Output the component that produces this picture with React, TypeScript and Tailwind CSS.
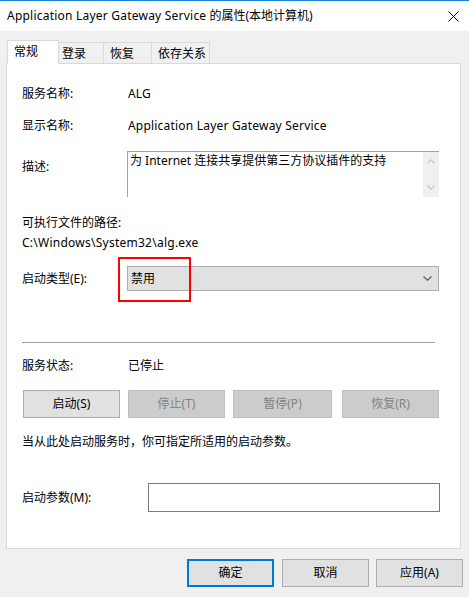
import React from "react";

function Chevron({ up, color, w = 9, h = 5 }: { up?: boolean; color: string; w?: number; h?: number }) {
  return (
    <svg width={w} height={h} viewBox={`0 0 ${w} ${h}`} className="block">
      <path
        d={up ? `M0.5 ${h - 0.5} L${w / 2} 0.8 L${w - 0.5} ${h - 0.5}` : `M0.5 0.5 L${w / 2} ${h - 0.8} L${w - 0.5} 0.5`}
        fill="none"
        stroke={color}
        strokeWidth="1.1"
      />
    </svg>
  );
}

export default function App() {
  return (
    <div className="w-[469px] h-[597px] bg-[#f0f0f0] overflow-hidden text-[12px] text-black font-['Noto_Sans','Noto_Sans_CJK_SC',sans-serif] flex flex-col">
      <div className="h-px bg-[#1883d7] shrink-0" />
      <div className="h-[30px] shrink-0 bg-white flex items-center justify-between pl-[7px] pr-[10px]">
        <span className="leading-[16px]">
          <span className="tracking-[0.22px]">Application Layer Gateway Service</span> 的属性(本地计算机)
        </span>
        <svg width="11" height="11" viewBox="0 0 11 11" className="block">
          <path d="M0.5 0.5L10.5 10.5M10.5 0.5L0.5 10.5" stroke="#000" strokeWidth="1" />
        </svg>
      </div>

      {/* tabs */}
      <div className="mt-[9px] ml-[7px] h-[24px] -mb-[24px] flex items-start relative z-10 shrink-0">
        <div className="w-[52px] h-[24px] bg-white border border-b-0 border-[#d9d9d9] pl-[6px] leading-[22px]">常规</div>
        <div className="mt-[2px] w-[45px] h-[21px] border-t border-r border-[#d9d9d9] pl-[3px] leading-[22px]">登录</div>
        <div className="mt-[2px] w-[48px] h-[21px] border-t border-r border-[#d9d9d9] pl-[6px] leading-[22px]">恢复</div>
        <div className="mt-[2px] w-[58px] h-[21px] border-t border-r border-[#d9d9d9] pl-[6px] leading-[22px]">依存关系</div>
      </div>

      {/* panel */}
      <div className="mt-[23px] ml-[6px] w-[455px] h-[486px] shrink-0 bg-white border border-[#d9d9d9] flex flex-col pl-[15px]">
        <div className="mt-[20px] h-[20px] flex leading-[20px]">
          <div className="w-[105px]">服务名称:</div>
          <div className="pl-[1px] tracking-[0.2px]">ALG</div>
        </div>
        <div className="mt-[12px] h-[20px] flex leading-[20px]">
          <div className="w-[105px]">显示名称:</div>
          <div className="pl-[1px] tracking-[0.2px]">Application Layer Gateway Service</div>
        </div>
        <div className="mt-[15px] h-[46px] flex">
          <div className="w-[105px] mt-[6px] leading-[20px]">描述:</div>
          <div className="w-[312px] h-[46px] border-t border-l border-[#a0a0a0] flex">
            <div className="flex-1 pl-[2px] leading-[18px]">为 Internet 连接共享提供第三方协议插件的支持</div>
            <div className="w-[16px] h-[45px] bg-[#f0f0f0] flex flex-col items-center justify-between pt-[7px] pb-[7px]">
              <Chevron up color="#c5c5c5" w={8} h={5} />
              <Chevron color="#c5c5c5" w={8} h={5} />
            </div>
          </div>
        </div>
        <div className="mt-[16px] h-[20px] leading-[20px]">可执行文件的路径:</div>
        <div className="h-[20px] leading-[20px] tracking-[0.25px]">C:\Windows\System32\alg.exe</div>
        <div className="mt-[13px] h-[25px] flex items-center">
          <div className="w-[105px] leading-[20px]">启动类型(E):</div>
          <div className="relative w-[312px] h-[25px] bg-[#e1e1e1] border border-[#adadad] flex items-center justify-between pl-[3px] pr-[6px]">
            <span className="leading-[20px]">禁用</span>
            <Chevron color="#555555" />
            <div className="absolute left-[-10px] top-[-10px] w-[73px] h-[45px] border-2 border-[#ff0000]" />
          </div>
        </div>
        <div className="mt-[51px] w-[413px] h-px bg-[#a0a0a0]" />
        <div className="mt-[13px] h-[20px] flex leading-[20px]">
          <div className="w-[105px]">服务状态:</div>
          <div className="pl-[1px]">已停止</div>
        </div>
        <div className="mt-[14px] h-[28px] flex ml-[1px]">
          <div className="w-[97px] h-[28px] bg-[#e1e1e1] border border-[#adadad] flex items-center justify-center">启动(S)</div>
          <div className="ml-[8px] w-[97px] h-[28px] bg-[#cccccc] border border-[#bfbfbf] text-[#838383] flex items-center justify-center">停止(T)</div>
          <div className="ml-[8px] w-[99px] h-[28px] bg-[#cccccc] border border-[#bfbfbf] text-[#838383] flex items-center justify-center">暂停(P)</div>
          <div className="ml-[10px] w-[97px] h-[28px] bg-[#cccccc] border border-[#bfbfbf] text-[#838383] flex items-center justify-center">恢复(R)</div>
        </div>
        <div className="mt-[14px] h-[20px] leading-[20px]">当从此处启动服务时，你可指定所适用的启动参数。</div>
        <div className="mt-[31px] h-[29px] flex items-center">
          <div className="w-[126px] leading-[20px]">启动参数(M):</div>
          <div className="w-[292px] h-[29px] bg-white border border-[#7a7a7a]" />
        </div>
      </div>

      {/* bottom buttons */}
      <div className="mt-[10px] h-[28px] flex justify-end pr-[6px] shrink-0">
        <div className="w-[87px] h-[28px] bg-[#e1e1e1] border-2 border-[#0078d7] flex items-center justify-center">确定</div>
        <div className="ml-[8px] w-[87px] h-[28px] bg-[#e1e1e1] border border-[#adadad] flex items-center justify-center">取消</div>
        <div className="ml-[7px] w-[87px] h-[28px] bg-[#e1e1e1] border border-[#adadad] flex items-center justify-center">应用(A)</div>
      </div>
    </div>
  );
}
